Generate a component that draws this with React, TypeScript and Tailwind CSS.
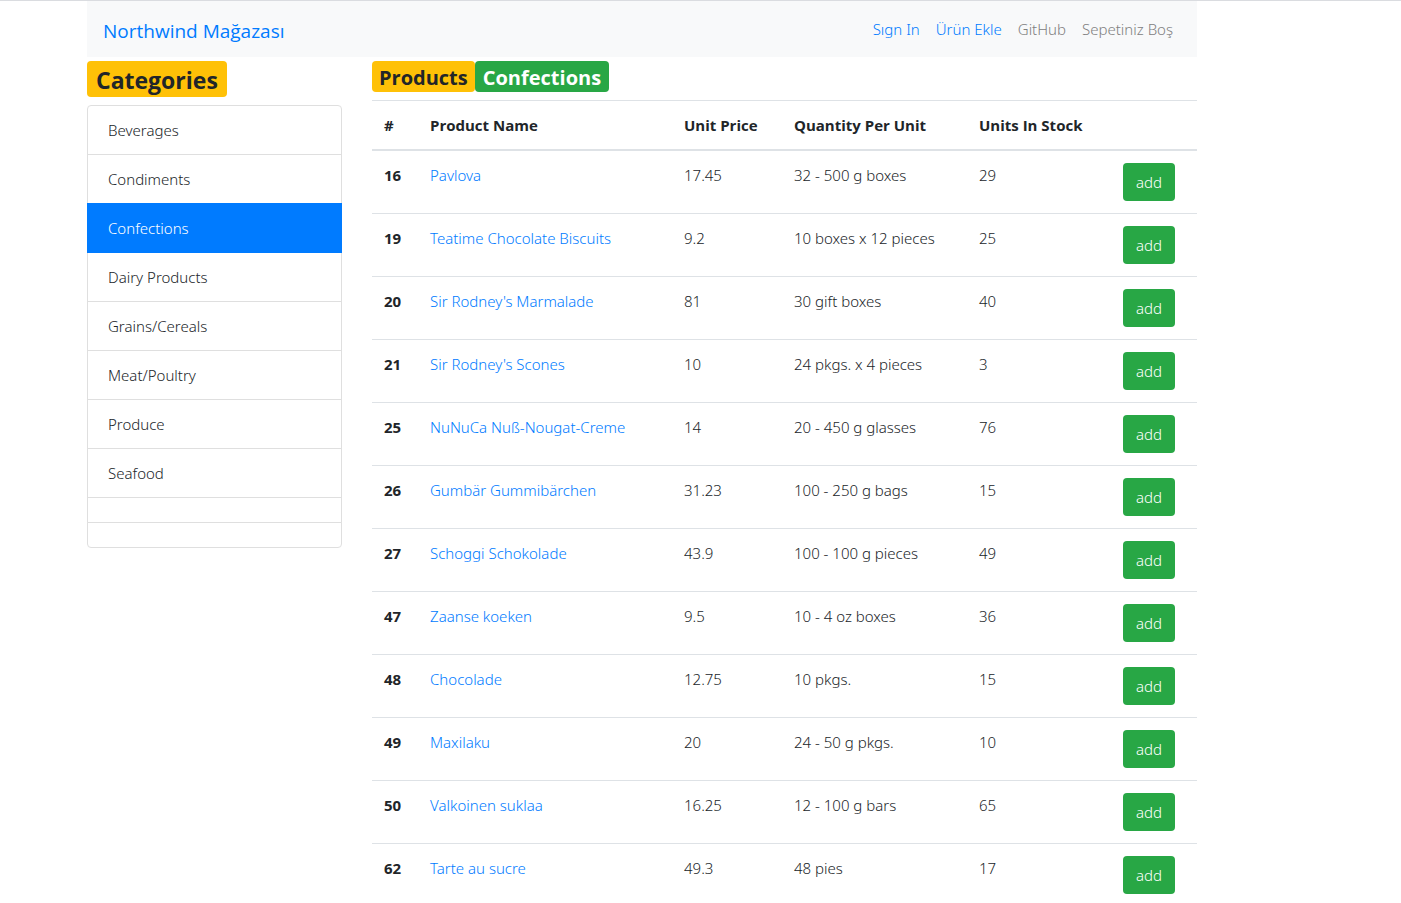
import { useState } from "react";

type Product = {
  id: number;
  name: string;
  price: string;
  quantity: string;
  stock: number;
};

const categories = [
  "Beverages",
  "Condiments",
  "Confections",
  "Dairy Products",
  "Grains/Cereals",
  "Meat/Poultry",
  "Produce",
  "Seafood",
  "",
  "",
];

const products: Product[] = [
  { id: 16, name: "Pavlova", price: "17.45", quantity: "32 - 500 g boxes", stock: 29 },
  { id: 19, name: "Teatime Chocolate Biscuits", price: "9.2", quantity: "10 boxes x 12 pieces", stock: 25 },
  { id: 20, name: "Sir Rodney's Marmalade", price: "81", quantity: "30 gift boxes", stock: 40 },
  { id: 21, name: "Sir Rodney's Scones", price: "10", quantity: "24 pkgs. x 4 pieces", stock: 3 },
  { id: 25, name: "NuNuCa Nuß-Nougat-Creme", price: "14", quantity: "20 - 450 g glasses", stock: 76 },
  { id: 26, name: "Gumbär Gummibärchen", price: "31.23", quantity: "100 - 250 g bags", stock: 15 },
  { id: 27, name: "Schoggi Schokolade", price: "43.9", quantity: "100 - 100 g pieces", stock: 49 },
  { id: 47, name: "Zaanse koeken", price: "9.5", quantity: "10 - 4 oz boxes", stock: 36 },
  { id: 48, name: "Chocolade", price: "12.75", quantity: "10 pkgs.", stock: 15 },
  { id: 49, name: "Maxilaku", price: "20", quantity: "24 - 50 g pkgs.", stock: 10 },
  { id: 50, name: "Valkoinen suklaa", price: "16.25", quantity: "12 - 100 g bars", stock: 65 },
  { id: 62, name: "Tarte au sucre", price: "49.3", quantity: "48 pies", stock: 17 },
];

function Navbar() {
  return (
    <nav className="flex h-14 items-center justify-between bg-[#f8f9fa] pr-6 pl-4">
      <a href="#" className="pt-1 font-['Open_Sans',sans-serif] text-[19px] leading-8 font-normal text-[#007bff]">
        Northwind Mağazası
      </a>
      <div className="flex gap-4">
        <a href="#" className="text-[#007bff]">Sıgn In</a>
        <a href="#" className="text-[#007bff]">Ürün Ekle</a>
        <a href="#" className="text-[#808080]">GitHub</a>
        <span className="text-[#808080]">Sepetiniz Boş</span>
      </div>
    </nav>
  );
}

function CategoryList({ active, onSelect }: { active: string; onSelect: (name: string) => void }) {
  return (
    <aside>
      <h3 className="inline-flex h-9 items-center rounded bg-[#ffc107] px-[9px] pt-0.5 font-['Open_Sans',sans-serif] text-[23px] font-bold">
        Categories
      </h3>
      <ul className="mt-2 flex flex-col">
        {categories.map((name, i) => (
          <li
            key={i}
            className={
              "-mt-px border first:mt-0 first:rounded-t last:rounded-b " +
              (name && name === active
                ? "relative border-[#007bff] bg-[#007bff] text-white"
                : "border-[#dfdfdf] bg-white")
            }
          >
            {name ? (
              <button type="button" onClick={() => onSelect(name)} className="block w-full px-5 py-3 text-left">
                {name}
              </button>
            ) : (
              <div className="h-6" />
            )}
          </li>
        ))}
      </ul>
    </aside>
  );
}

function ProductTable() {
  return (
    <table className="mt-2 w-full table-fixed border-collapse text-left">
      <colgroup>
        <col className="w-[46px]" />
        <col />
        <col className="w-[110px]" />
        <col className="w-[185px]" />
        <col className="w-[144px]" />
        <col className="w-[86px]" />
      </colgroup>
      <thead>
        <tr className="border-t border-b-2 border-t-[#dee2e6] border-b-[#dee2e6] font-['Open_Sans',sans-serif] font-bold">
          <th className="p-3">#</th>
          <th className="p-3">Product Name</th>
          <th className="p-3">Unit Price</th>
          <th className="p-3">Quantity Per Unit</th>
          <th className="p-3">Units In Stock</th>
          <th className="p-3" />
        </tr>
      </thead>
      <tbody>
        {products.map((p) => (
          <tr key={p.id} className="border-t border-[#dee2e6] align-top">
            <th scope="row" className="p-3 font-['Open_Sans',sans-serif] font-bold">{p.id}</th>
            <td className="p-3">
              <a href="#" className="text-[#007bff]">{p.name}</a>
            </td>
            <td className="p-3">{p.price}</td>
            <td className="p-3">{p.quantity}</td>
            <td className="p-3">{p.stock}</td>
            <td className="p-3">
              <button type="button" className="block h-[38px] w-[52px] rounded bg-[#28a745] text-white">
                add
              </button>
            </td>
          </tr>
        ))}
      </tbody>
    </table>
  );
}

export default function App() {
  const [active, setActive] = useState("Confections");

  return (
    <div className="border-t border-[#dadce0] bg-white pr-[117px] font-['Noto_Sans','Open_Sans',sans-serif] text-[15px] leading-6 font-light text-[#212529]">
      <div className="mx-auto max-w-[1110px]">
        <Navbar />
        <div className="mt-1 grid grid-cols-[255px_1fr] gap-[30px]">
          <CategoryList active={active} onSelect={setActive} />
          <main>
            <h4 className="flex font-['Open_Sans',sans-serif] text-[20px] font-bold">
              <span className="flex h-[31px] items-center rounded bg-[#ffc107] px-[7px] pt-0.5">Products</span>
              <span className="flex h-[31px] items-center rounded bg-[#28a745] px-2 pt-0.5 text-white">{active}</span>
            </h4>
            <ProductTable />
          </main>
        </div>
      </div>
    </div>
  );
}
